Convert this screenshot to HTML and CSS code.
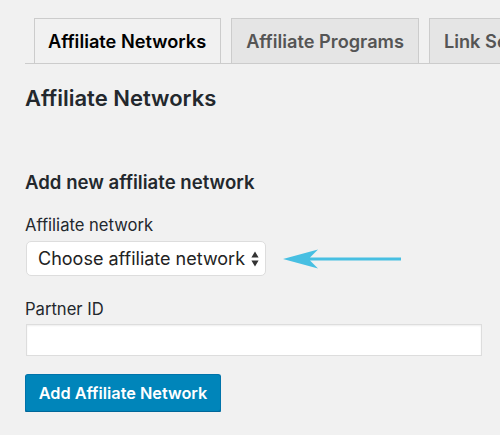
FILE: index.html
```html
<!DOCTYPE html>
<html>
<head>
<meta charset="utf-8">
<link rel="stylesheet" href="styles.css">
</head>
<body>
<div class="wrap">
  <nav class="tabs">
    <a class="tab active">Affiliate Networks</a>
    <a class="tab">Affiliate Programs</a>
    <a class="tab">Link Settings</a>
  </nav>
  <h1 class="title">Affiliate Networks</h1>
  <h2 class="subtitle">Add new affiliate network</h2>
  <label class="label">Affiliate network</label>
  <div class="select-row">
    <div class="select">
      <span>Choose affiliate network</span>
      <svg class="updown" width="8" height="16" viewBox="0 0 8 16"><path d="M4 0.5 L7.6 6.5 H0.4 Z M4 15.5 L7.6 9.5 H0.4 Z" fill="#333"/></svg>
    </div>
    <svg class="pointer" width="120" height="22" viewBox="0 0 120 22"><path d="M0 11 L35 1.5 L27 9.5 H118 V12.5 H27 L35 20.5 Z" fill="#47bfe2"/></svg>
  </div>
  <label class="label partner">Partner ID</label>
  <input class="input" type="text">
  <button class="btn">Add Affiliate Network</button>
</div>
</body>
</html>
```
FILE: styles.css
```css
html, body {
  margin: 0;
  padding: 0;
  background: #f1f1f1;
  font-family: Inter, "Liberation Sans", sans-serif;
  color: #23282d;
  overflow: hidden;
}
.wrap {
  padding: 18px 0 0 25px;
}
.tabs {
  display: flex;
  gap: 10px;
  padding-left: 9px;
  border-bottom: 1px solid #ccc;
  height: 45px;
  white-space: nowrap;
  overflow: hidden;
}
.tab {
  display: flex;
  align-items: center;
  flex-shrink: 0;
  box-sizing: border-box;
  height: 46px;
  padding: 0 14px 0 13px;
  border: 1px solid #ccc;
  background: #e5e5e5;
  font-size: 18.2px;
  font-weight: 600;
  color: #555;
}
.tab + .tab {
  padding-left: 14px;
}
.tab.active {
  background: #f1f1f1;
  border-bottom-color: #f1f1f1;
  color: #000;
}
.title {
  margin: 22px 0 0;
  font-size: 22px;
  font-weight: 600;
  line-height: 24px;
}
.subtitle {
  margin: 62px 0 0;
  font-size: 18.6px;
  font-weight: 600;
  line-height: 20px;
}
.label {
  display: block;
  margin-top: 23px;
  font-size: 16.6px;
  line-height: 20px;
}
.label.partner {
  margin-top: 23px;
}
.select-row {
  display: flex;
  align-items: center;
  gap: 17px;
  margin-top: 6px;
}
.select {
  display: flex;
  align-items: center;
  justify-content: space-between;
  box-sizing: border-box;
  width: 240px;
  height: 35px;
  margin-left: 1px;
  padding: 0 6px 0 11px;
  background: #fff;
  border: 1px solid #ddd;
  border-radius: 5px;
  font-size: 18px;
  color: #222;
  white-space: nowrap;
}
.pointer {
  display: block;
}
.input {
  display: block;
  box-sizing: border-box;
  width: 456px;
  height: 32px;
  margin: 5px 0 0 1px;
  background: #fff;
  border: 1px solid #ddd;
  box-shadow: inset 0 1px 2px rgba(0,0,0,0.07);
}
.btn {
  display: block;
  box-sizing: border-box;
  width: 196px;
  height: 38px;
  margin-top: 18px;
  padding: 0;
  background: #0085ba;
  border: 1px solid #0073aa;
  border-bottom-color: #006799;
  border-radius: 3px;
  box-shadow: 0 1px 0 #006799;
  color: #fff;
  font-family: Inter, "Liberation Sans", sans-serif;
  font-size: 16.3px;
  font-weight: 600;
}
```
